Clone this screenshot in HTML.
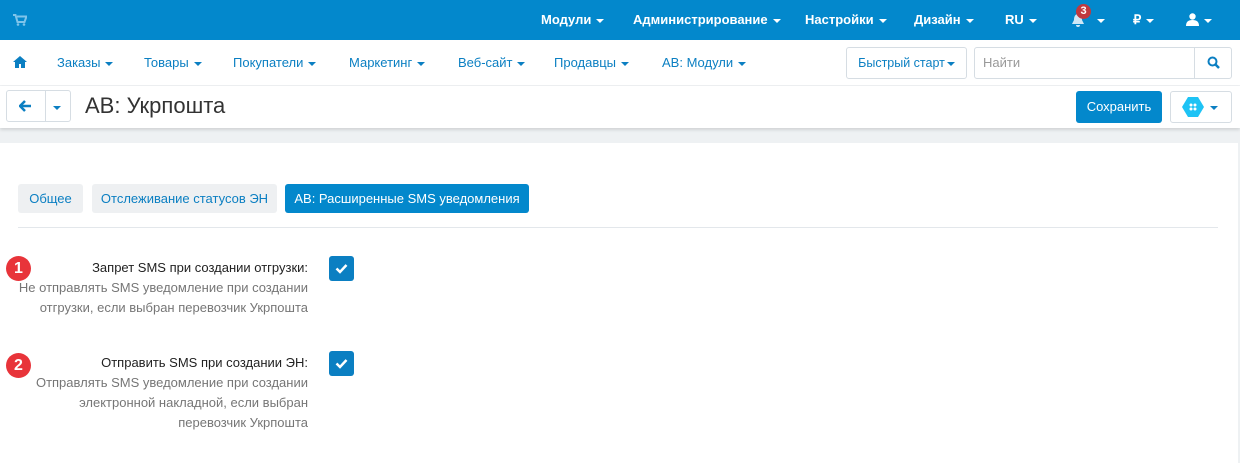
<!DOCTYPE html>
<html><head><meta charset="utf-8"><style>
*{box-sizing:border-box;margin:0;padding:0}
body{width:1240px;height:463px;overflow:hidden;background:#eef1f3;font-family:"Liberation Sans",sans-serif;font-size:13px;position:relative}
.a{position:absolute;white-space:nowrap}
.top{position:absolute;left:0;top:0;width:1240px;height:40px;background:#0388cc}
.top .a{color:#fff;font-weight:bold;top:12px}
.car{display:inline-block;width:0;height:0;border-left:4px solid transparent;border-right:4px solid transparent;border-top:4px solid currentColor;vertical-align:middle;margin-left:5px}
.nav{position:absolute;left:0;top:40px;width:1240px;height:46px;background:#fff;border-bottom:1px solid #eef0f2}
.nav .a{color:#0b7fc2;top:15px}
.tb{position:absolute;left:0;top:86px;width:1240px;height:42px;background:#fff;box-shadow:0 2px 3px rgba(0,0,0,.12)}
.btn{position:absolute;border:1px solid #d6dde3;border-radius:3px;background:#fff}
.content{position:absolute;left:0;top:143px;width:1238px;height:320px;background:#fff}
.tab{position:absolute;top:41px;height:29px;border-radius:3px;background:#eef0f2;color:#0b7fc2;line-height:29px;text-align:center}
.lab{position:absolute;right:930px;text-align:right;color:#222;line-height:20px}
.desc{color:#767676}
.cb{position:absolute;left:329px;width:25px;height:25px;background:#0b7fc2;border-radius:3px}
.bd{position:absolute;left:6px;width:25px;height:25px;border-radius:50%;background:#e8343a;color:#fff;font-weight:bold;font-size:16px;text-align:center;line-height:25px}
</style></head><body>
<div class="top">
<svg class="a" style="left:13px;top:14px" width="14" height="12" viewBox="0 0 14 12"><path d="M0 1h2.5l2 7h7l2-5.5H4" fill="none" stroke="#7fc4ea" stroke-width="2"/><circle cx="5" cy="10.5" r="1.3" fill="#7fc4ea"/><circle cx="11" cy="10.5" r="1.3" fill="#7fc4ea"/></svg>
<div class="a" style="left:541px">Модули<span class="car"></span></div>
<div class="a" style="left:633px">Администрирование<span class="car"></span></div>
<div class="a" style="left:805px">Настройки<span class="car"></span></div>
<div class="a" style="left:914px">Дизайн<span class="car"></span></div>
<div class="a" style="left:1005px">RU<span class="car"></span></div>
<svg class="a" style="left:1071px;top:13px" width="14" height="14" viewBox="0 0 14 14"><path d="M7 1C4 1 3 4 3 7L1 11h12L11 7C11 4 10 1 7 1z M5 12a2 2 0 0 0 4 0" fill="#cfe8f7"/></svg>
<div class="a" style="left:1076px;top:4px;width:15px;height:15px;border-radius:50%;background:#c0393f;font-size:11px;line-height:15px;text-align:center">3</div>
<div class="a" style="left:1092px;top:12px"><span class="car"></span></div>
<div class="a" style="left:1133px">₽<span class="car"></span></div>
<svg class="a" style="left:1186px;top:13px" width="13" height="13" viewBox="0 0 13 13"><circle cx="6.5" cy="3.5" r="3.2" fill="#fff"/><path d="M0 13c0-4 2-6 6.5-6s6.5 2 6.5 6z" fill="#fff"/></svg>
<div class="a" style="left:1199px;top:12px"><span class="car"></span></div>
</div>
<div class="nav">
<svg class="a" style="left:13px;top:16px" width="14" height="12" viewBox="0 0 14 12"><path d="M7 0L0 6h2v6h4V8h2v4h4V6h2z" fill="#0b7fc2"/></svg>
<div class="a" style="left:57px">Заказы<span class="car"></span></div>
<div class="a" style="left:144px">Товары<span class="car"></span></div>
<div class="a" style="left:233px">Покупатели<span class="car"></span></div>
<div class="a" style="left:349px">Маркетинг<span class="car"></span></div>
<div class="a" style="left:458px">Веб-сайт<span class="car"></span></div>
<div class="a" style="left:554px">Продавцы<span class="car"></span></div>
<div class="a" style="left:662px">AB: Модули<span class="car"></span></div>
<div class="btn" style="left:846px;top:7px;width:121px;height:32px;color:#0b7fc2;line-height:30px;text-align:center;font-size:12.5px">Быстрый старт<span class="car" style="margin-left:2px"></span></div>
<div class="btn" style="left:974px;top:7px;width:258px;height:32px;color:#999;line-height:30px;padding-left:8px">Найти</div>
<div class="a" style="left:1194px;top:8px;width:1px;height:30px;background:#d6dde3"></div>
<svg class="a" style="left:1207px;top:16px" width="13" height="13" viewBox="0 0 13 13"><circle cx="5.5" cy="5.5" r="4" fill="none" stroke="#0b7fc2" stroke-width="2"/><path d="M8.5 8.5L12 12" stroke="#0b7fc2" stroke-width="2.5"/></svg>
</div>
<div class="tb">
<div class="btn" style="left:6px;top:4px;width:65px;height:32px"></div>
<div class="a" style="left:45px;top:5px;width:1px;height:30px;background:#d6dde3"></div>
<svg class="a" style="left:19px;top:14px" width="13" height="12" viewBox="0 0 13 12"><path d="M6 1L1 6l5 5M1 6h11" fill="none" stroke="#0b7fc2" stroke-width="2.5"/></svg>
<div class="a" style="left:53px;top:13px;color:#0b7fc2"><span class="car" style="margin:0"></span></div>
<div class="a" style="left:85px;top:7px;font-size:22px;color:#333">AB: Укрпошта</div>
<div class="a" style="left:1076px;top:5px;width:86px;height:32px;background:#0388cc;border-radius:3px;color:#fff;text-align:center;line-height:32px">Сохранить</div>
<div class="btn" style="left:1170px;top:5px;width:62px;height:32px"></div>
<svg class="a" style="left:1182px;top:11px" width="22" height="20" viewBox="0 0 22 20"><path d="M6 0h10l6 10-6 10H6L0 10z" fill="#1ec3f5"/><circle cx="9" cy="8" r="1.5" fill="#fff"/><circle cx="13" cy="8" r="1.5" fill="#fff"/><circle cx="9" cy="12" r="1.5" fill="#fff"/><circle cx="13" cy="12" r="1.5" fill="#fff"/></svg>
<div class="a" style="left:1210px;top:13px;color:#0b7fc2"><span class="car" style="margin:0"></span></div>
</div>
<div class="content">
<div class="tab" style="left:18px;width:65px">Общее</div>
<div class="tab" style="left:92px;width:185px">Отслеживание статусов ЭН</div>
<div class="tab" style="left:285px;width:244px;background:#0388cc;color:#fff">AB: Расширенные SMS уведомления</div>
<div class="a" style="left:18px;top:84px;width:1200px;height:1px;background:#e3e7eb"></div>
<div class="bd" style="top:113px">1</div>
<div class="lab" style="top:115px">Запрет SMS при создании отгрузки:<br><span class="desc">Не отправлять SMS уведомление при создании<br>отгрузки, если выбран перевозчик Укрпошта</span></div>
<div class="cb" style="top:113px"></div>
<div class="bd" style="top:210px">2</div>
<div class="lab" style="top:210px">Отправить SMS при создании ЭН:<br><span class="desc">Отправлять SMS уведомление при создании<br>электронной накладной, если выбран<br>перевозчик Укрпошта</span></div>
<div class="cb" style="top:208px"></div>
<svg class="a" style="left:335px;top:120px" width="13" height="11" viewBox="0 0 13 11"><path d="M1.5 5.5l3.5 3.5 6.5-7" fill="none" stroke="#fff" stroke-width="2.5"/></svg>
<svg class="a" style="left:335px;top:215px" width="13" height="11" viewBox="0 0 13 11"><path d="M1.5 5.5l3.5 3.5 6.5-7" fill="none" stroke="#fff" stroke-width="2.5"/></svg>
</div>
</body></html>
